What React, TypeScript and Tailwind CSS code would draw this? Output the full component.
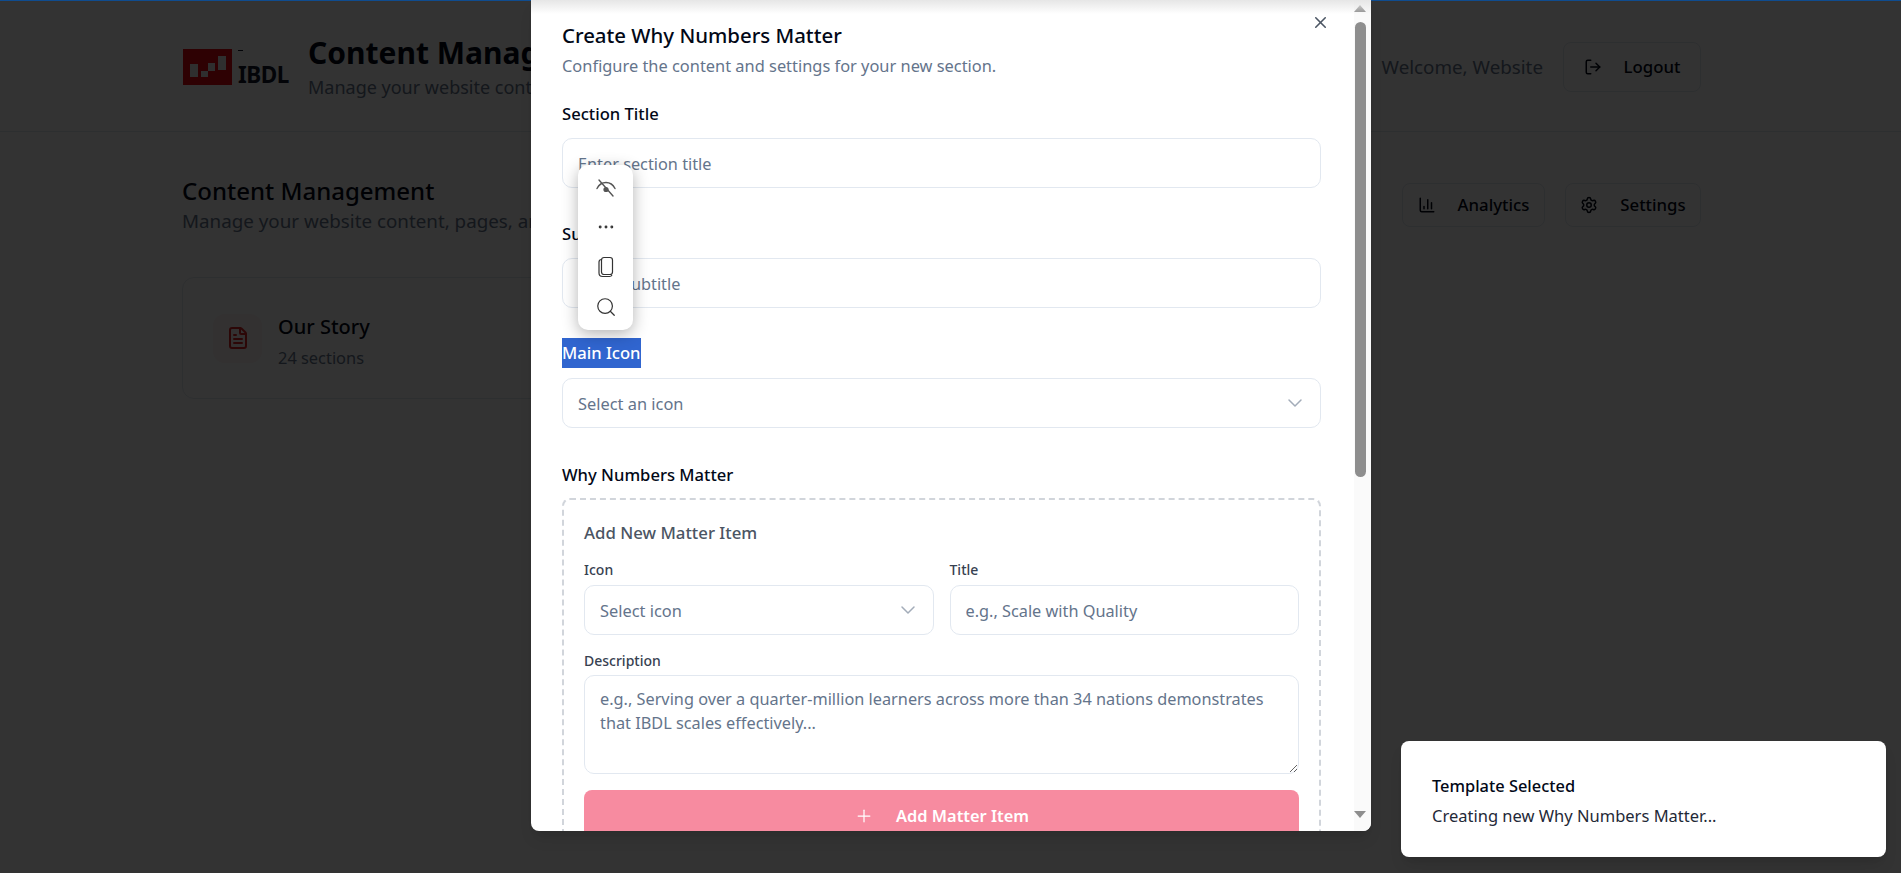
import { BarChart3, ChevronDown, Ellipsis, FileText, LogOut, Plus, Search, Settings, X } from "lucide-react";

function OutlineButton({ icon, label, className }: { icon: React.ReactNode; label: string; className: string }) {
  return (
    <button className={`flex items-center justify-center gap-[22px] rounded-lg border border-[#e2e8f0] bg-white text-[16.8px] font-medium text-[#020817] ${className}`}>
      {icon}
      {label}
    </button>
  );
}

function Logo() {
  return (
    <div className="relative ml-[1px] flex w-[104px] items-end gap-[6px]">
      <svg className="block h-[36px] w-[49px] shrink-0" viewBox="0 0 49 36">
        <rect width="49" height="36" fill="#e30613" />
        <rect x="7" y="15" width="8" height="13" fill="#e8e8e8" />
        <rect x="18" y="22" width="7" height="6" fill="#e8e8e8" />
        <rect x="25" y="14" width="7" height="8" fill="#e8e8e8" />
        <rect x="35" y="7" width="8" height="14" fill="#e8e8e8" />
      </svg>
      <span className="text-[22.5px] leading-[20px] font-bold tracking-[-0.5px] text-[#0f172a]">IBDL</span>
      <div className="absolute top-[1px] left-[55px] h-[1px] w-[5px] bg-[#0f172a]" />
    </div>
  );
}

function Page() {
  return (
    <div className="w-full">
      <header className="h-[132px] border-b border-[#e2e8f0] pt-[35px] pr-[200px] pl-[182px]">
        <div className="flex items-center justify-between">
          <div className="flex items-center gap-[21px]">
            <Logo />
            <div>
              <h1 className="text-[30px] leading-[36px] font-bold text-[#020817]">Content Management</h1>
              <p className="mt-[4px] text-[18px] leading-[24px] text-[#64748b]">Manage your website content</p>
            </div>
          </div>
          <div className="flex items-center gap-[20px]">
            <span className="text-[18.8px] text-[#64748b]">Welcome, Website</span>
            <OutlineButton icon={<LogOut className="size-[18px]" />} label="Logout" className="h-[50px] w-[138px]" />
          </div>
        </div>
      </header>
      <main className="pt-[43px] pr-[200px] pl-[182px]">
        <div className="flex items-start justify-between">
          <div>
            <h2 className="text-[24px] leading-[32px] font-medium text-[#020817]">Content Management</h2>
            <p className="text-[18.8px] leading-[29px] text-[#64748b]">Manage your website content, pages, and more</p>
          </div>
          <div className="mt-[8px] flex gap-[20px]">
            <OutlineButton icon={<BarChart3 className="size-[18px]" />} label="Analytics" className="h-[44px] w-[143px]" />
            <OutlineButton icon={<Settings className="size-[18px]" />} label="Settings" className="h-[44px] w-[136px]" />
          </div>
        </div>
        <div className="mt-[41px] flex h-[122px] w-[490px] items-center gap-[16px] rounded-xl border border-[#e2e8f0] bg-white pl-[30px]">
          <div className="flex size-[49px] items-center justify-center rounded-xl bg-[#fef2f2]">
            <FileText className="size-[24px] text-[#dc2626]" />
          </div>
          <div className="pt-[7px]">
            <h3 className="text-[20px] leading-[28px] font-medium text-[#020817]">Our Story</h3>
            <p className="mt-[5px] text-[16.4px] leading-[24px] text-[#64748b]">24 sections</p>
          </div>
        </div>
      </main>
    </div>
  );
}

const fieldClass =
  "block h-[50px] w-full rounded-[10px] border border-[#e2e8f0] bg-white px-[15px] pt-[2px] text-[16.3px] text-[#020817] outline-none placeholder:text-[#64748b]";

function SelectBox({ placeholder }: { placeholder: string }) {
  return (
    <div className="flex h-[50px] w-full items-center justify-between rounded-[10px] border border-[#e2e8f0] bg-white pr-[13px] pl-[15px] text-[16.4px] text-[#64748b]">
      <span className="pt-[2px]">{placeholder}</span>
      <ChevronDown className="size-[24px] text-[#a3acb9]" strokeWidth={1.5} />
    </div>
  );
}

function Label({ children }: { children: React.ReactNode }) {
  return <label className="mb-[12px] block text-[16.6px] leading-[24px] font-medium text-[#020817]">{children}</label>;
}

function SmallLabel({ children }: { children: React.ReactNode }) {
  return <label className="block text-[14px] leading-[20px] font-medium text-[#374151]">{children}</label>;
}

function Scrollbar() {
  return (
    <div className="flex h-full w-[17px] shrink-0 flex-col items-center bg-[#fafafa] pr-[5px]">
      <div className="mt-[5px] h-0 w-0 border-x-[6px] border-b-[7px] border-x-transparent border-b-[#8e8e8e]" />
      <div className="mt-[10px] h-[455px] w-[11px] rounded-full bg-[#8e8e8e]" />
      <div className="mt-auto mb-[13px] h-0 w-0 border-x-[6px] border-t-[7px] border-x-transparent border-t-[#8e8e8e]" />
    </div>
  );
}

function Modal() {
  return (
    <div className="absolute top-0 left-[531px] flex h-[831px] w-[840px] overflow-hidden rounded-b-lg bg-white shadow-lg">
      <div className="absolute inset-x-0 top-0 h-[14px] bg-gradient-to-b from-[#e6e6e6] to-transparent" />
      <div className="relative min-w-0 flex-1 pt-[21px] pr-[33px] pl-[31px]">
        <X className="absolute top-[13px] right-[24px] size-[19px] text-[#4b5563]" />
        <h2 className="text-[20.4px] leading-[28px] font-medium text-[#020817]">Create Why Numbers Matter</h2>
        <p className="mt-[5px] text-[16.4px] leading-[24px] text-[#64748b]">Configure the content and settings for your new section.</p>

        <div className="mt-[24px]">
          <Label>Section Title</Label>
          <input className={fieldClass} placeholder="Enter section title" />
        </div>
        <div className="mt-[34px]">
          <Label>Subtitle</Label>
          <input className={fieldClass} placeholder="Enter subtitle" />
        </div>
        <div className="mt-[30px]">
          <label className="mb-[10px] block text-[16.6px] leading-[24px] font-medium text-[#020817]">
            <span className="inline-block bg-[#3065cf] leading-[30px] text-white">Main Icon</span>
          </label>
          <SelectBox placeholder="Select an icon" />
        </div>
        <div className="mt-[35px]">
          <label className="mb-[11px] block text-[16.6px] leading-[24px] font-medium text-[#020817]">Why Numbers Matter</label>
          <div className="rounded-lg border-2 border-dashed border-[#d1d5db] px-[20px] pt-[21px]">
            <h4 className="text-[16.8px] leading-[24px] font-medium text-[#4b5563]">Add New Matter Item</h4>
            <div className="mt-[15px] grid grid-cols-2 gap-[16px]">
              <div>
                <SmallLabel>Icon</SmallLabel>
                <div className="mt-[5px]">
                  <SelectBox placeholder="Select icon" />
                </div>
              </div>
              <div>
                <SmallLabel>Title</SmallLabel>
                <input className={`mt-[5px] ${fieldClass}`} placeholder="e.g., Scale with Quality" />
              </div>
            </div>
            <div className="mt-[16px]">
              <SmallLabel>Description</SmallLabel>
              <textarea
                className="mt-[4px] block h-[99px] w-full rounded-[10px] border border-[#e2e8f0] bg-white px-[15px] py-[11px] text-[16.3px] leading-[24px] outline-none placeholder:text-[#64748b]"
                placeholder="e.g., Serving over a quarter-million learners across more than 34 nations demonstrates that IBDL scales effectively..."
              />
            </div>
            <button className="mt-[16px] flex h-[50px] w-full items-center justify-center gap-[22px] rounded-lg bg-[#f78ba0] pt-[2px] text-[16.4px] font-semibold text-white">
              <Plus className="size-[20px]" strokeWidth={1.5} />
              Add Matter Item
            </button>
          </div>
        </div>
      </div>
      <Scrollbar />
    </div>
  );
}

function SelectionMenu() {
  return (
    <div className="absolute top-[165px] left-[578px] flex h-[165px] w-[55px] flex-col items-center justify-between rounded-[10px] bg-white pt-[12px] pb-[12px] shadow-[0_4px_16px_rgba(0,0,0,0.3)]">
      <svg className="size-[22px] text-[#555]" viewBox="0 0 22 22" fill="none" stroke="currentColor" strokeWidth="1.4" strokeLinecap="round">
        <path d="M2 11.5C4 7.5 7.5 5.5 11 5.5s7 2 9 6" />
        <circle cx="11" cy="12.5" r="2.6" fill="currentColor" stroke="none" />
        <path d="M4 3l14 16" />
      </svg>
      <Ellipsis className="size-[20px] text-[#333]" strokeWidth={1.5} />
      <svg className="size-[22px] text-[#333]" viewBox="0 0 22 22" fill="none" stroke="currentColor" strokeWidth="1.2">
        <rect x="6.5" y="1.5" width="11" height="17" rx="2.5" />
        <path d="M6.5 3.5c-1.5 0-2.5 1-2.5 2.5v11c0 2 1.5 3.500 3.500 3.500h7c1 0 2-.5 2.500-1.500" />
      </svg>
      <Search className="size-[22px] text-[#333]" strokeWidth={1.3} />
    </div>
  );
}

function Toast() {
  return (
    <div className="absolute top-[741px] left-[1401px] h-[116px] w-[485px] rounded-lg bg-white pt-[33px] pl-[31px] shadow-lg">
      <p className="text-[16.4px] leading-[24px] font-medium text-[#020817]">Template Selected</p>
      <p className="mt-[6px] text-[16.5px] leading-[24px] text-[#1f2937]">Creating new Why Numbers Matter...</p>
    </div>
  );
}

export default function App() {
  return (
    <div className="relative h-[873px] w-[1901px] overflow-hidden bg-white font-['Noto_Sans',sans-serif]">
      <Page />
      <div className="absolute inset-0 bg-black/80" />
      <div className="absolute inset-x-0 top-0 h-[1px] bg-[#0f4c8f]" />
      <Modal />
      <SelectionMenu />
      <Toast />
    </div>
  );
}
